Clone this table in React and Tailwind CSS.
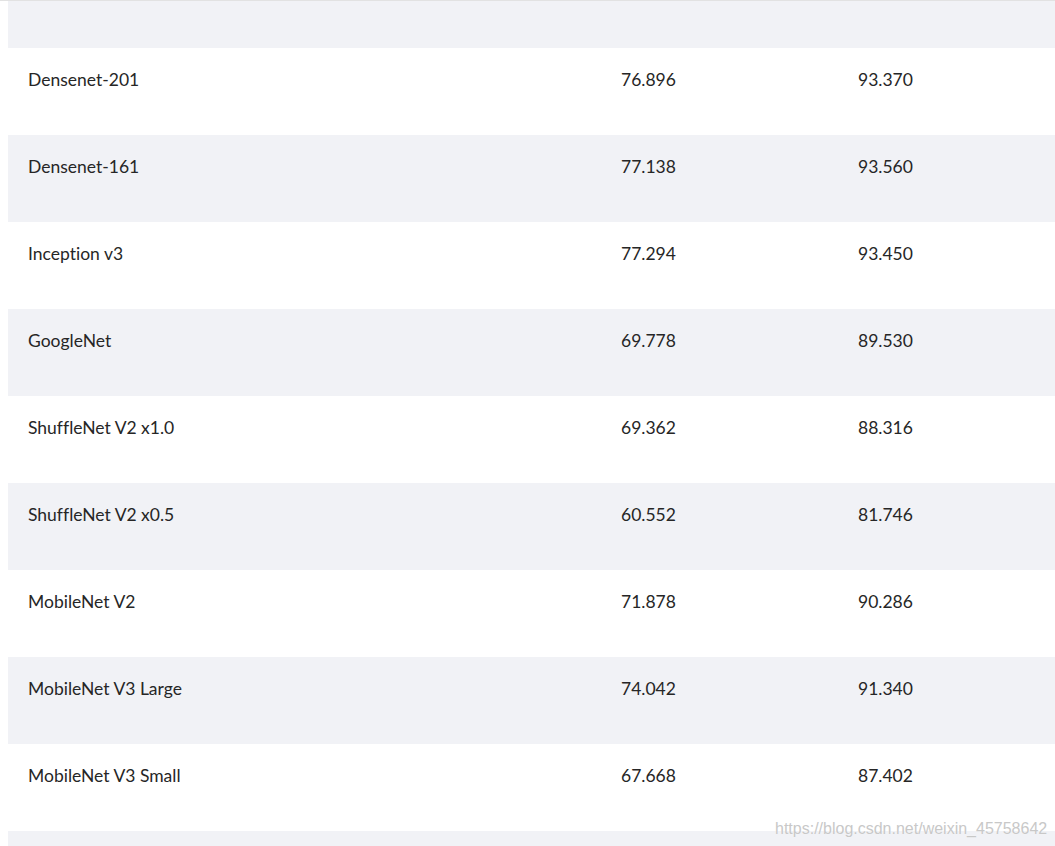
import React from "react";

const rows = [
  ["Densenet-201", "76.896", "93.370"],
  ["Densenet-161", "77.138", "93.560"],
  ["Inception v3", "77.294", "93.450"],
  ["GoogleNet", "69.778", "89.530"],
  ["ShuffleNet V2 x1.0", "69.362", "88.316"],
  ["ShuffleNet V2 x0.5", "60.552", "81.746"],
  ["MobileNet V2", "71.878", "90.286"],
  ["MobileNet V3 Large", "74.042", "91.340"],
  ["MobileNet V3 Small", "67.668", "87.402"],
];

export default function App() {
  return (
    <div className="relative h-screen bg-white border-t border-[#e2e2e2] overflow-hidden">
      <div
        className="ml-2 text-[17.5px] text-[#262626] [font-variant-ligatures:none]"
        style={{ fontFamily: "Lato, 'Open Sans', sans-serif" }}
      >
        {/* header strip */}
        <div className="h-[47px] bg-[#f1f2f6]" />

        {rows.map(([name, top1, top5], i) => (
          <div
            key={name}
            className={`flex h-[87px] pt-[20px] leading-6 ${i % 2 === 1 ? "bg-[#f1f2f6]" : "bg-white"}`}
          >
            <div className="w-[593px] pl-5">{name}</div>
            <div className="w-[237px] pl-5">{top1}</div>
            <div className="flex-1 pl-5">{top5}</div>
          </div>
        ))}

        {/* next row, cut off by the window */}
        <div className="h-[87px] bg-[#f1f2f6]" />
      </div>

      {/* csdn watermark */}
      <div
        className="absolute left-[775px] top-[816px] text-[16px] text-[#c8c8c8]"
        style={{ fontFamily: "'Liberation Sans', Arial, sans-serif", textShadow: "0 0 1px #fff" }}
      >
        https://blog.csdn.net/weixin_45758642
      </div>
    </div>
  );
}
